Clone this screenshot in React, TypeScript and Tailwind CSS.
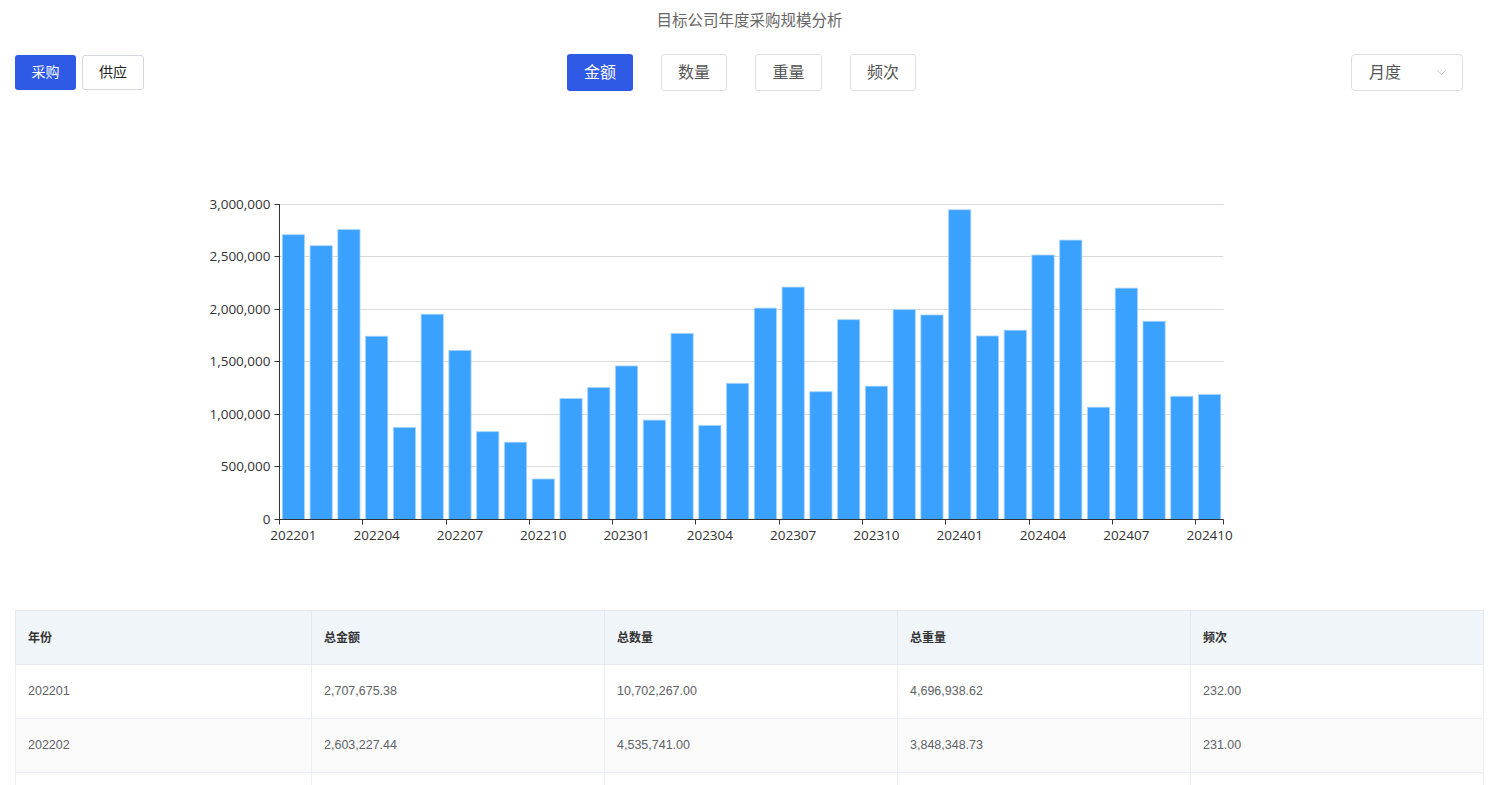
import React from "react";
import { ChevronDown } from "lucide-react";

const months = [
  "202201", "202202", "202203", "202204", "202205", "202206", "202207", "202208", "202209", "202210", "202211", "202212",
  "202301", "202302", "202303", "202304", "202305", "202306", "202307", "202308", "202309", "202310", "202311", "202312",
  "202401", "202402", "202403", "202404", "202405", "202406", "202407", "202408", "202409", "202410",
];

const values = [
  2707675, 2603227, 2756310, 1743000, 876000, 1952000, 1608000, 835000, 735000, 385000, 1150000, 1255000,
  1460000, 945000, 1770000, 895000, 1295000, 2010000, 2210000, 1215000, 1900000, 1268000, 1995000, 1945000,
  2945000, 1745000, 1800000, 2515000, 2657000, 1068000, 2200000, 1885000, 1172000, 1188000,
];

const rows = [
  ["202201", "2,707,675.38", "10,702,267.00", "4,696,938.62", "232.00"],
  ["202202", "2,603,227.44", "4,535,741.00", "3,848,348.73", "231.00"],
];

// chart geometry (svg coordinates)
const X0 = 264.5;
const X1 = 1208.5;
const Y0 = 428.5;
const YTOP = 113;
const MAX = 3000000;
const band = (X1 - X0) / months.length;

const fmt = (n: number) => n.toLocaleString("en-US");

const Chart: React.FC = () => {
  const yOf = (v: number) => Y0 - (v / MAX) * (Y0 - YTOP);
  const crisp = (y: number) => Math.round(y - 0.5) + 0.5;
  const grid = [0, 500000, 1000000, 1500000, 2000000, 2500000, 3000000];
  const tickIdx = months.map((_, i) => i).filter((i) => i % 3 === 0);

  return (
    <svg width={1469} height={519} viewBox="0 0 1469 519" className="block">
      {/* grid */}
      {grid.map((g) => (
        <g key={g}>
          {g > 0 && <line x1={X0} x2={X1} y1={crisp(yOf(g))} y2={crisp(yOf(g))} stroke="#d9d9d9" strokeWidth={1} />}
          <line x1={X0 - 5} x2={X0} y1={crisp(yOf(g))} y2={crisp(yOf(g))} stroke="#333" strokeWidth={1} />
          <text
            x={X0 - 9}
            y={yOf(g) + 4.5}
            textAnchor="end"
            fontSize={13.5}
            fill="#333"
            fontFamily="'Open Sans', 'Liberation Sans', sans-serif"
          >
            {fmt(g)}
          </text>
        </g>
      ))}

      {/* bars */}
      {values.map((v, i) => {
        const w = band * 0.8;
        const x = X0 + i * band + band * 0.1;
        const y = yOf(v);
        return (
          <rect key={i} x={x} y={y} width={w} height={Y0 - y} fill="#3ba1ff" stroke="#a8d4ff" strokeWidth={0.8} />
        );
      })}

      {/* axes */}
      <line x1={X0} x2={X0} y1={YTOP} y2={Y0} stroke="#333" strokeWidth={1} />
      <line x1={X0} x2={X1} y1={Y0} y2={Y0} stroke="#333" strokeWidth={1} />
      {[...tickIdx, months.length].map((i) => (
        <line
          key={i}
          x1={Math.round(X0 + i * band - 0.5) + 0.5}
          x2={Math.round(X0 + i * band - 0.5) + 0.5}
          y1={Y0}
          y2={Y0 + 5}
          stroke="#333"
          strokeWidth={1}
        />
      ))}
      {tickIdx.map((i) => (
        <text
          key={i}
          x={X0 + (i + 0.5) * band}
          y={Y0 + 20}
          textAnchor="middle"
          fontSize={13.5}
          fill="#333"
          fontFamily="'Open Sans', 'Liberation Sans', sans-serif"
        >
          {months[i]}
        </text>
      ))}
    </svg>
  );
};

const App: React.FC = () => {
  return (
    <div
      className="h-[785px] overflow-hidden bg-white px-[15px]"
      style={{ fontFamily: "'Liberation Sans', 'Noto Sans CJK SC', sans-serif" }}
    >
      {/* 标题 */}
      <h1 className="pt-[11px] text-center text-[15.5px] leading-[20px] font-normal text-[#666]">
        目标公司年度采购规模分析
      </h1>

      {/* 工具栏 */}
      <div className="mt-[23px] flex h-[37px] items-center">
        <div className="flex gap-[6px]">
          <button className="h-[35px] w-[61px] rounded-[3px] bg-[#2f5ae5] text-[14px] text-white">采购</button>
          <button className="h-[35px] w-[62px] rounded-[3px] border border-[#d4d7de] bg-white text-[14px] text-[#222]">
            供应
          </button>
        </div>
        <div className="ml-[423px] flex gap-[28px]">
          <button className="h-[37px] w-[66px] rounded-[3px] bg-[#2f5ae5] text-[16px] text-white">金额</button>
          <button className="h-[37px] w-[66px] rounded-[3px] border border-[#dcdfe6] bg-white text-[16px] text-[#555]">
            数量
          </button>
          <button className="h-[37px] w-[67px] rounded-[3px] border border-[#dcdfe6] bg-white text-[16px] text-[#555]">
            重量
          </button>
          <button className="h-[37px] w-[66px] rounded-[3px] border border-[#dcdfe6] bg-white text-[16px] text-[#555]">
            频次
          </button>
        </div>
        <div className="mr-[21px] ml-auto flex h-[37px] w-[112px] items-center justify-between rounded-[4px] border border-[#dcdfe6] pr-[12px] pl-[17px]">
          <span className="text-[16px] text-[#555]">月度</span>
          <ChevronDown size={17} strokeWidth={1.2} color="#b8bcc4" />
        </div>
      </div>

      {/* 图表 */}
      <Chart />

      {/* 表格 */}
      <table className="w-full table-fixed border-collapse">
        <thead>
          <tr className="h-[54px] bg-[#f0f5fa]">
            {["年份", "总金额", "总数量", "总重量", "频次"].map((h, i) => (
              <th
                key={h}
                className={`border border-[#e6eaf0] px-[12px] text-left text-[12px] font-bold text-[#333] ${
                  i === 0 ? "w-[296px]" : ""
                }`}
              >
                {h}
              </th>
            ))}
          </tr>
        </thead>
        <tbody>
          {rows.map((r, ri) => (
            <tr key={r[0]} className={`h-[54px] ${ri % 2 === 1 ? "bg-[#fafafa]" : "bg-white"}`}>
              {r.map((c, ci) => (
                <td
                  key={ci}
                  className="border border-[#ebeef5] px-[12px] text-[12.5px] text-[#606266]"
                  style={{ fontFamily: "'Liberation Sans Narrow', 'Liberation Sans', sans-serif" }}
                >
                  {c}
                </td>
              ))}
            </tr>
          ))}
          {/* 下一行（被截断） */}
          <tr className="h-[54px] bg-white">
            {[0, 1, 2, 3, 4].map((k) => (
              <td key={k} className="border border-[#ebeef5] px-[12px]" />
            ))}
          </tr>
        </tbody>
      </table>
    </div>
  );
};

export default App;
